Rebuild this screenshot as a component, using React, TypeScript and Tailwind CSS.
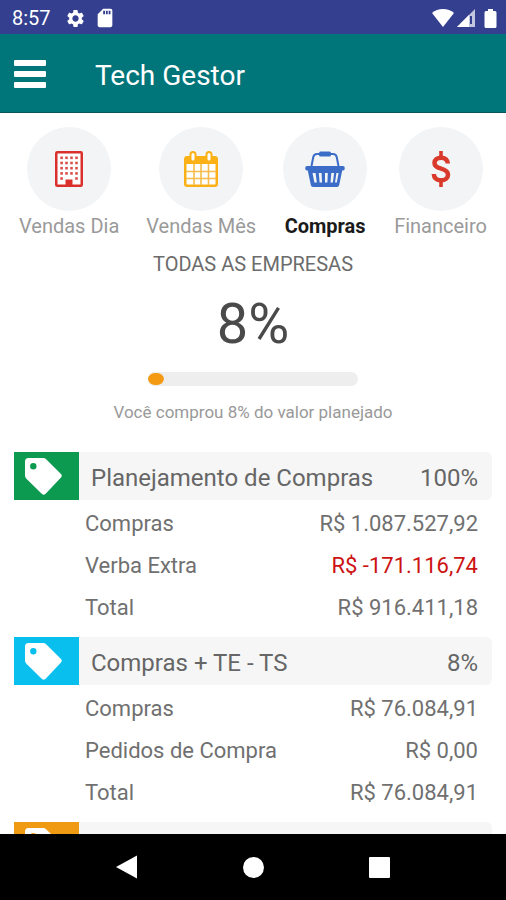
import type { ReactNode } from "react";
import { MdSdCard, MdSettings } from "react-icons/md";

type Row = { label: string; value: string; negative?: boolean };

type Section = {
  id: string;
  title?: string;
  percent?: string;
  color: string;
  rows: Row[];
};

const sections: Section[] = [
  {
    id: "planejamento",
    title: "Planejamento de Compras",
    percent: "100%",
    color: "bg-[#0b9a50]",
    rows: [
      { label: "Compras", value: "R$ 1.087.527,92" },
      { label: "Verba Extra", value: "R$ -171.116,74", negative: true },
      { label: "Total", value: "R$ 916.411,18" },
    ],
  },
  {
    id: "compras",
    title: "Compras + TE - TS",
    percent: "8%",
    color: "bg-[#08bfee]",
    rows: [
      { label: "Compras", value: "R$ 76.084,91" },
      { label: "Pedidos de Compra", value: "R$ 0,00" },
      { label: "Total", value: "R$ 76.084,91" },
    ],
  },
  { id: "saldo", color: "bg-[#f09a14]", rows: [] },
];

function BuildingIcon() {
  return (
    <svg width="28" height="36" viewBox="0 0 28 36" fill="none" aria-hidden="true">
      <rect x="1.25" y="1.25" width="25.5" height="33.5" rx="1" fill="#fff" stroke="#d9302c" strokeWidth="2.5" />
      {[5.5, 10.7, 15.9, 21.1].map((y) =>
        [5.3, 10.2, 15.2, 20.2].map((x) => (
          <rect key={`${x}-${y}`} x={x} y={y} width="2.6" height="2.6" fill="#d9504c" />
        )),
      )}
      <rect x="5.3" y="26.2" width="2.6" height="2.6" fill="#d9504c" />
      <rect x="20.2" y="26.2" width="2.6" height="2.6" fill="#d9504c" />
      <path d="M10.5 34.5v-6h7v6z" fill="#d9302c" />
    </svg>
  );
}

function CalendarIcon() {
  return (
    <svg width="34" height="36" viewBox="0 0 34 36" fill="none" aria-hidden="true">
      <rect x="1.25" y="6.25" width="31.5" height="28.5" rx="2" fill="#fff" stroke="#fbb116" strokeWidth="2.5" />
      <path d="M1 7h32v6H1z" fill="#fbb116" />
      <path d="M10 13v21M17 13v21M24.5 13v21M2 20.5h30M2 27.5h30" stroke="#f6bd4c" strokeWidth="1.6" />
      <rect x="6.5" y="1" width="5" height="9.5" rx="2.5" fill="#fff" stroke="#fbb116" strokeWidth="2" />
      <rect x="22.5" y="1" width="5" height="9.5" rx="2.5" fill="#fff" stroke="#fbb116" strokeWidth="2" />
    </svg>
  );
}

function BasketIcon() {
  return (
    <svg width="40" height="36" viewBox="0 0 40 36" fill="none" aria-hidden="true">
      <path d="M6.500 15 8.300 6Q9 3 12 3h16q3 0 3.700 3l1.800 9" stroke="#3b6cc7" strokeWidth="2" />
      <rect x="14" y=".5" width="12" height="5" rx="1.500" fill="#3b6cc7" />
      <path
        fillRule="evenodd"
        d="M2 15h36q1.800 0 1.800 2.200T38 19.400h-.8l-3 14.600q-.4 2-2.200 2H8q-1.800 0-2.200-2l-3-14.600H2Q.2 19.400.2 17.200T2 15ZM7.500 22l1.900 9.500h2.400L10.600 22ZM13.800 22l.8 9.500H17L16.600 22ZM20 22v9.500h2.400l.4-9.500ZM26.300 22l-.8 9.500h2.400l1.200-9.500ZM31.400 22l-1.400 9.500h1.800L33.600 22Z"
        fill="#3b6cc7"
      />
    </svg>
  );
}

function DollarIcon() {
  return (
    <svg width="20" height="36" viewBox="0 0 20 36" fill="none" stroke="#d93a2b" aria-hidden="true">
      <path d="M10 0v6M10 30v6" strokeWidth="3.600" />
      <path
        d="M16.800 12.500C16.600 8.900 14 6.700 10.200 6.700 6.300 6.700 3.500 8.800 3.500 12c0 3.400 2.800 4.600 6.600 5.700 4.200 1.200 6.900 2.600 6.900 6 0 3.500-2.900 5.600-6.900 5.600-4.300 0-7.100-2.200-7.300-6.300"
        strokeWidth="4.500"
      />
    </svg>
  );
}

function TagIcon() {
  return (
    <svg width="37" height="37" viewBox="0 0 37 37" className="text-white" aria-hidden="true">
      <path
        fillRule="evenodd"
        fill="currentColor"
        d="M3.500 0H18q2 0 3.400 1.400L36 16q1.500 1.700 0 3.400L20.400 36q-1.700 1.500-3.400 0L1.400 20.800Q0 19.400 0 17.500V3.500Q0 0 3.500 0ZM8.300 5a3.200 3.200 0 1 0 0 6.400 3.200 3.200 0 0 0 0-6.400Z"
      />
    </svg>
  );
}

const tabs: { label: string; icon: ReactNode; active?: boolean }[] = [
  { label: "Vendas Dia", icon: <BuildingIcon /> },
  { label: "Vendas Mês", icon: <CalendarIcon /> },
  { label: "Compras", icon: <BasketIcon />, active: true },
  { label: "Financeiro", icon: <DollarIcon /> },
];

function StatusBar() {
  return (
    <div className="flex h-[34px] shrink-0 items-center bg-[#343f90] pt-0.5 pr-2 pl-3 text-white">
      <span className="text-xl leading-6">8:57</span>
      <MdSettings className="ml-3.5 size-[21px]" />
      <MdSdCard className="ml-2 size-[22px]" />
      <div className="ml-auto flex items-center gap-[3px]">
        <svg width="22" height="18" viewBox="0 0 22 18" fill="currentColor" aria-hidden="true">
          <path d="M11 18 0 4Q4.500 0 11 0t11 4Z" />
        </svg>
        <svg width="18" height="18" viewBox="0 0 18 18" fill="currentColor" aria-hidden="true">
          <path d="M18 0v18H0Z" opacity=".7" />
          <path d="M12 6v12H0Z" />
          <path d="M13 7h2v8h-2z" fill="#343f90" />
        </svg>
        <svg width="20" height="19" viewBox="0 0 20 19" fill="currentColor" aria-hidden="true">
          <path d="M10 0h5v2h2q1.500 0 1.500 1.500v14q0 1.500-1.500 1.500H8q-1.500 0-1.500-1.500v-14Q6.500 2 8 2h2Z" />
        </svg>
      </div>
    </div>
  );
}

function Header() {
  return (
    <header className="flex h-[79px] shrink-0 items-center border-b border-[#0b555c] bg-[#00757a] px-3.5 pt-0.5 text-white">
      <button type="button" aria-label="Menu" className="flex w-8 flex-col gap-[5px]">
        <span className="h-1.5 rounded-[1px] bg-white" />
        <span className="h-1.5 rounded-[1px] bg-white" />
        <span className="h-1.5 rounded-[1px] bg-white" />
      </button>
      <h1 className="ml-[49px] pt-1 text-[28px] leading-9">Tech Gestor</h1>
    </header>
  );
}

function SectionCard({ section }: { section: Section }) {
  return (
    <section>
      <div className="flex h-12">
        <div className={`flex w-[65px] shrink-0 items-center pl-[11px] ${section.color}`}>
          <TagIcon />
        </div>
        <div className="flex flex-1 items-center justify-between rounded-r-md bg-[#f6f6f6] pt-[3px] pr-3.5 pl-3 text-2xl text-[#666]">
          <h2>{section.title}</h2>
          <span>{section.percent}</span>
        </div>
      </div>
      <div className="pt-0.5 pr-3.5 pb-[9px] pl-[71px]">
        <table className="w-full text-[22px] text-[#707070]">
          <tbody>
            {section.rows.map((row) => (
              <tr key={row.label} className="h-[42px]">
                <th scope="row" className="text-left font-normal">
                  {row.label}
                </th>
                <td className={`text-right ${row.negative ? "text-[#cc1212]" : ""}`}>{row.value}</td>
              </tr>
            ))}
          </tbody>
        </table>
      </div>
    </section>
  );
}

function SystemNav() {
  return (
    <nav className="flex h-[66px] shrink-0 justify-center bg-black text-white">
      <button type="button" aria-label="Voltar" className="flex w-1/4 items-center justify-center">
        <svg width="22" height="24" viewBox="0 0 22 24" fill="currentColor" aria-hidden="true">
          <path d="M21 .5v23L0 12Z" />
        </svg>
      </button>
      <button type="button" aria-label="Início" className="flex w-1/4 items-center justify-center">
        <span className="size-[21px] rounded-full bg-white" />
      </button>
      <button type="button" aria-label="Recentes" className="flex w-1/4 items-center justify-center">
        <span className="size-[21px] rounded-[1px] bg-white" />
      </button>
    </nav>
  );
}

export default function App() {
  return (
    <div className="flex h-screen flex-col bg-white font-['Roboto',sans-serif]">
      <StatusBar />
      <Header />
      <main className="min-h-0 flex-1 overflow-hidden">
        <nav className="flex justify-between px-[19px] pt-3.5">
          {tabs.map((tab) => (
            <button
              key={tab.label}
              type="button"
              aria-current={tab.active ? "page" : undefined}
              className="flex flex-col items-center"
            >
              <span className="flex size-[84px] items-center justify-center rounded-full bg-[#f2f4f6]">
                {tab.icon}
              </span>
              <span
                className={`pt-px text-xl leading-7 ${tab.active ? "font-bold text-[#1a1a1a]" : "text-[#9a9a9a]"}`}
              >
                {tab.label}
              </span>
            </button>
          ))}
        </nav>

        <div className="mt-2.5 flex flex-col items-center">
          <p className="text-xl leading-7 text-[#6c6c6c]">TODAS AS EMPRESAS</p>
          <p className="mt-3.5 text-[56px] leading-[64px] text-[#4a4a4a]">8%</p>
          <div
            role="progressbar"
            aria-label="Valor comprado"
            aria-valuenow={8}
            aria-valuemin={0}
            aria-valuemax={100}
            className="mt-4 h-3.5 w-5/12 rounded-full bg-[#eee]"
          >
            <div className="h-full rounded-full border-y border-[#eee] bg-[#f39a12]" style={{ width: "8%" }} />
          </div>
          <p className="mt-3.5 text-[17px] leading-6 text-[#999]">Você comprou 8% do valor planejado</p>
        </div>

        <div className="mt-7 px-3.5">
          {sections.map((section) => (
            <SectionCard key={section.id} section={section} />
          ))}
        </div>
      </main>
      <SystemNav />
    </div>
  );
}
